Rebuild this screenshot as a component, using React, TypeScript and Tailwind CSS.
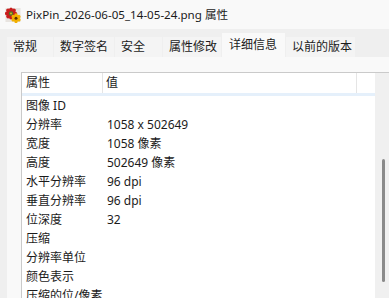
import React from "react";

const rows: [string, string][] = [
  ["图像 ID", ""],
  ["分辨率", "1058 x 502649"],
  ["宽度", "1058 像素"],
  ["高度", "502649 像素"],
  ["水平分辨率", "96 dpi"],
  ["垂直分辨率", "96 dpi"],
  ["位深度", "32"],
  ["压缩", ""],
  ["分辨率单位", ""],
  ["颜色表示", ""],
  ["压缩的位/像素", ""],
];

const tabs: { label: string; w: string; sel?: boolean }[] = [
  { label: "常规", w: "w-[46px]" },
  { label: "数字签名", w: "w-[60px]" },
  { label: "安全", w: "w-[47px]" },
  { label: "属性修改", w: "w-[58px]" },
  { label: "详细信息", w: "w-[63px]", sel: true },
  { label: "以前的版本", w: "w-[69px]" },
];

function Icon() {
  return (
    <svg width="16" height="16" viewBox="0 0 16 16">
      <rect x="0.5" y="1" width="15" height="14" fill="#e8e4e0" />
      <g>
        {[0, 45, 90, 135, 180, 225, 270, 315].map((a) => (
          <ellipse key={a} cx="6" cy="3" rx="2" ry="2.6" fill="#c81e1e" transform={`rotate(${a} 6 6.5)`} />
        ))}
        <circle cx="6" cy="6.5" r="2.2" fill="#4a7a2a" />
        <circle cx="6" cy="6.5" r="1" fill="#e0b020" />
      </g>
      <g>
        {[0, 60, 120, 180, 240, 300].map((a) => (
          <ellipse key={a} cx="11" cy="8.4" rx="1.8" ry="2.2" fill="#f2b000" transform={`rotate(${a} 11 11.2)`} />
        ))}
        <circle cx="11" cy="11.2" r="1.5" fill="#5a3000" />
      </g>
    </svg>
  );
}

export default function App() {
  return (
    <div className="relative w-[389px] h-[298px] overflow-hidden bg-[#efefef] font-['Noto_Sans','Noto_Sans_CJK_SC',sans-serif] text-[#1b1b1b]">
      <div className="h-[29px] bg-[#f9f9f9] flex items-center pl-[5px]">
        <Icon />
        <span className="ml-[5px] text-[11.6px] leading-none">PixPin_2026-06-05_14-05-24.png 属性</span>
      </div>
      <div className="h-[28px] flex items-end pl-[7px] gap-[1px]">
        {tabs.map((t) =>
          t.sel ? (
            <div key={t.label} className={`${t.w} h-[25px] bg-[#f9f9f9] text-[12px] leading-none flex items-center pl-[7px] pb-[2px] -mb-[1px] relative`}>
              {t.label}
            </div>
          ) : (
            <div key={t.label} className={`${t.w} h-[20px] bg-[#f4f4f4] text-[12px] leading-none flex items-center pl-[6px]`}>
              {t.label}
            </div>
          )
        )}
      </div>
      <div className="ml-[7px] h-[241px] bg-[#f9f9f9] pl-[14px] pt-[15px]">
        <div className="w-[372px] h-[240px] bg-white border border-[#cacaca] flex">
          <div className="flex-1 flex flex-col">
            <div className="h-[20px] flex text-[12px] leading-none">
              <div className="w-[81px] flex items-center pl-[4px] border-r border-[#e5e5e5]">属性</div>
              <div className="w-[254px] flex items-center pl-[3px] border-r border-[#e5e5e5]">值</div>
              <div className="flex-1"></div>
            </div>
            <div className="h-[3px] bg-[#e5f0fb]"></div>
            {rows.map(([k, v]) => (
              <div key={k} className="h-[19px] flex items-center text-[12px] leading-none">
                <div className="w-[82px] pl-[4px] whitespace-nowrap">{k}</div>
                <div className="pl-[3px] whitespace-nowrap">{v}</div>
              </div>
            ))}
          </div>
          <div className="w-[17px] bg-[#f0f0f0] relative">
            <div className="absolute left-[7px] top-[86px] w-[3px] h-[123px] rounded-full bg-[#8a8a8a]"></div>
          </div>
        </div>
      </div>
    </div>
  );
}
